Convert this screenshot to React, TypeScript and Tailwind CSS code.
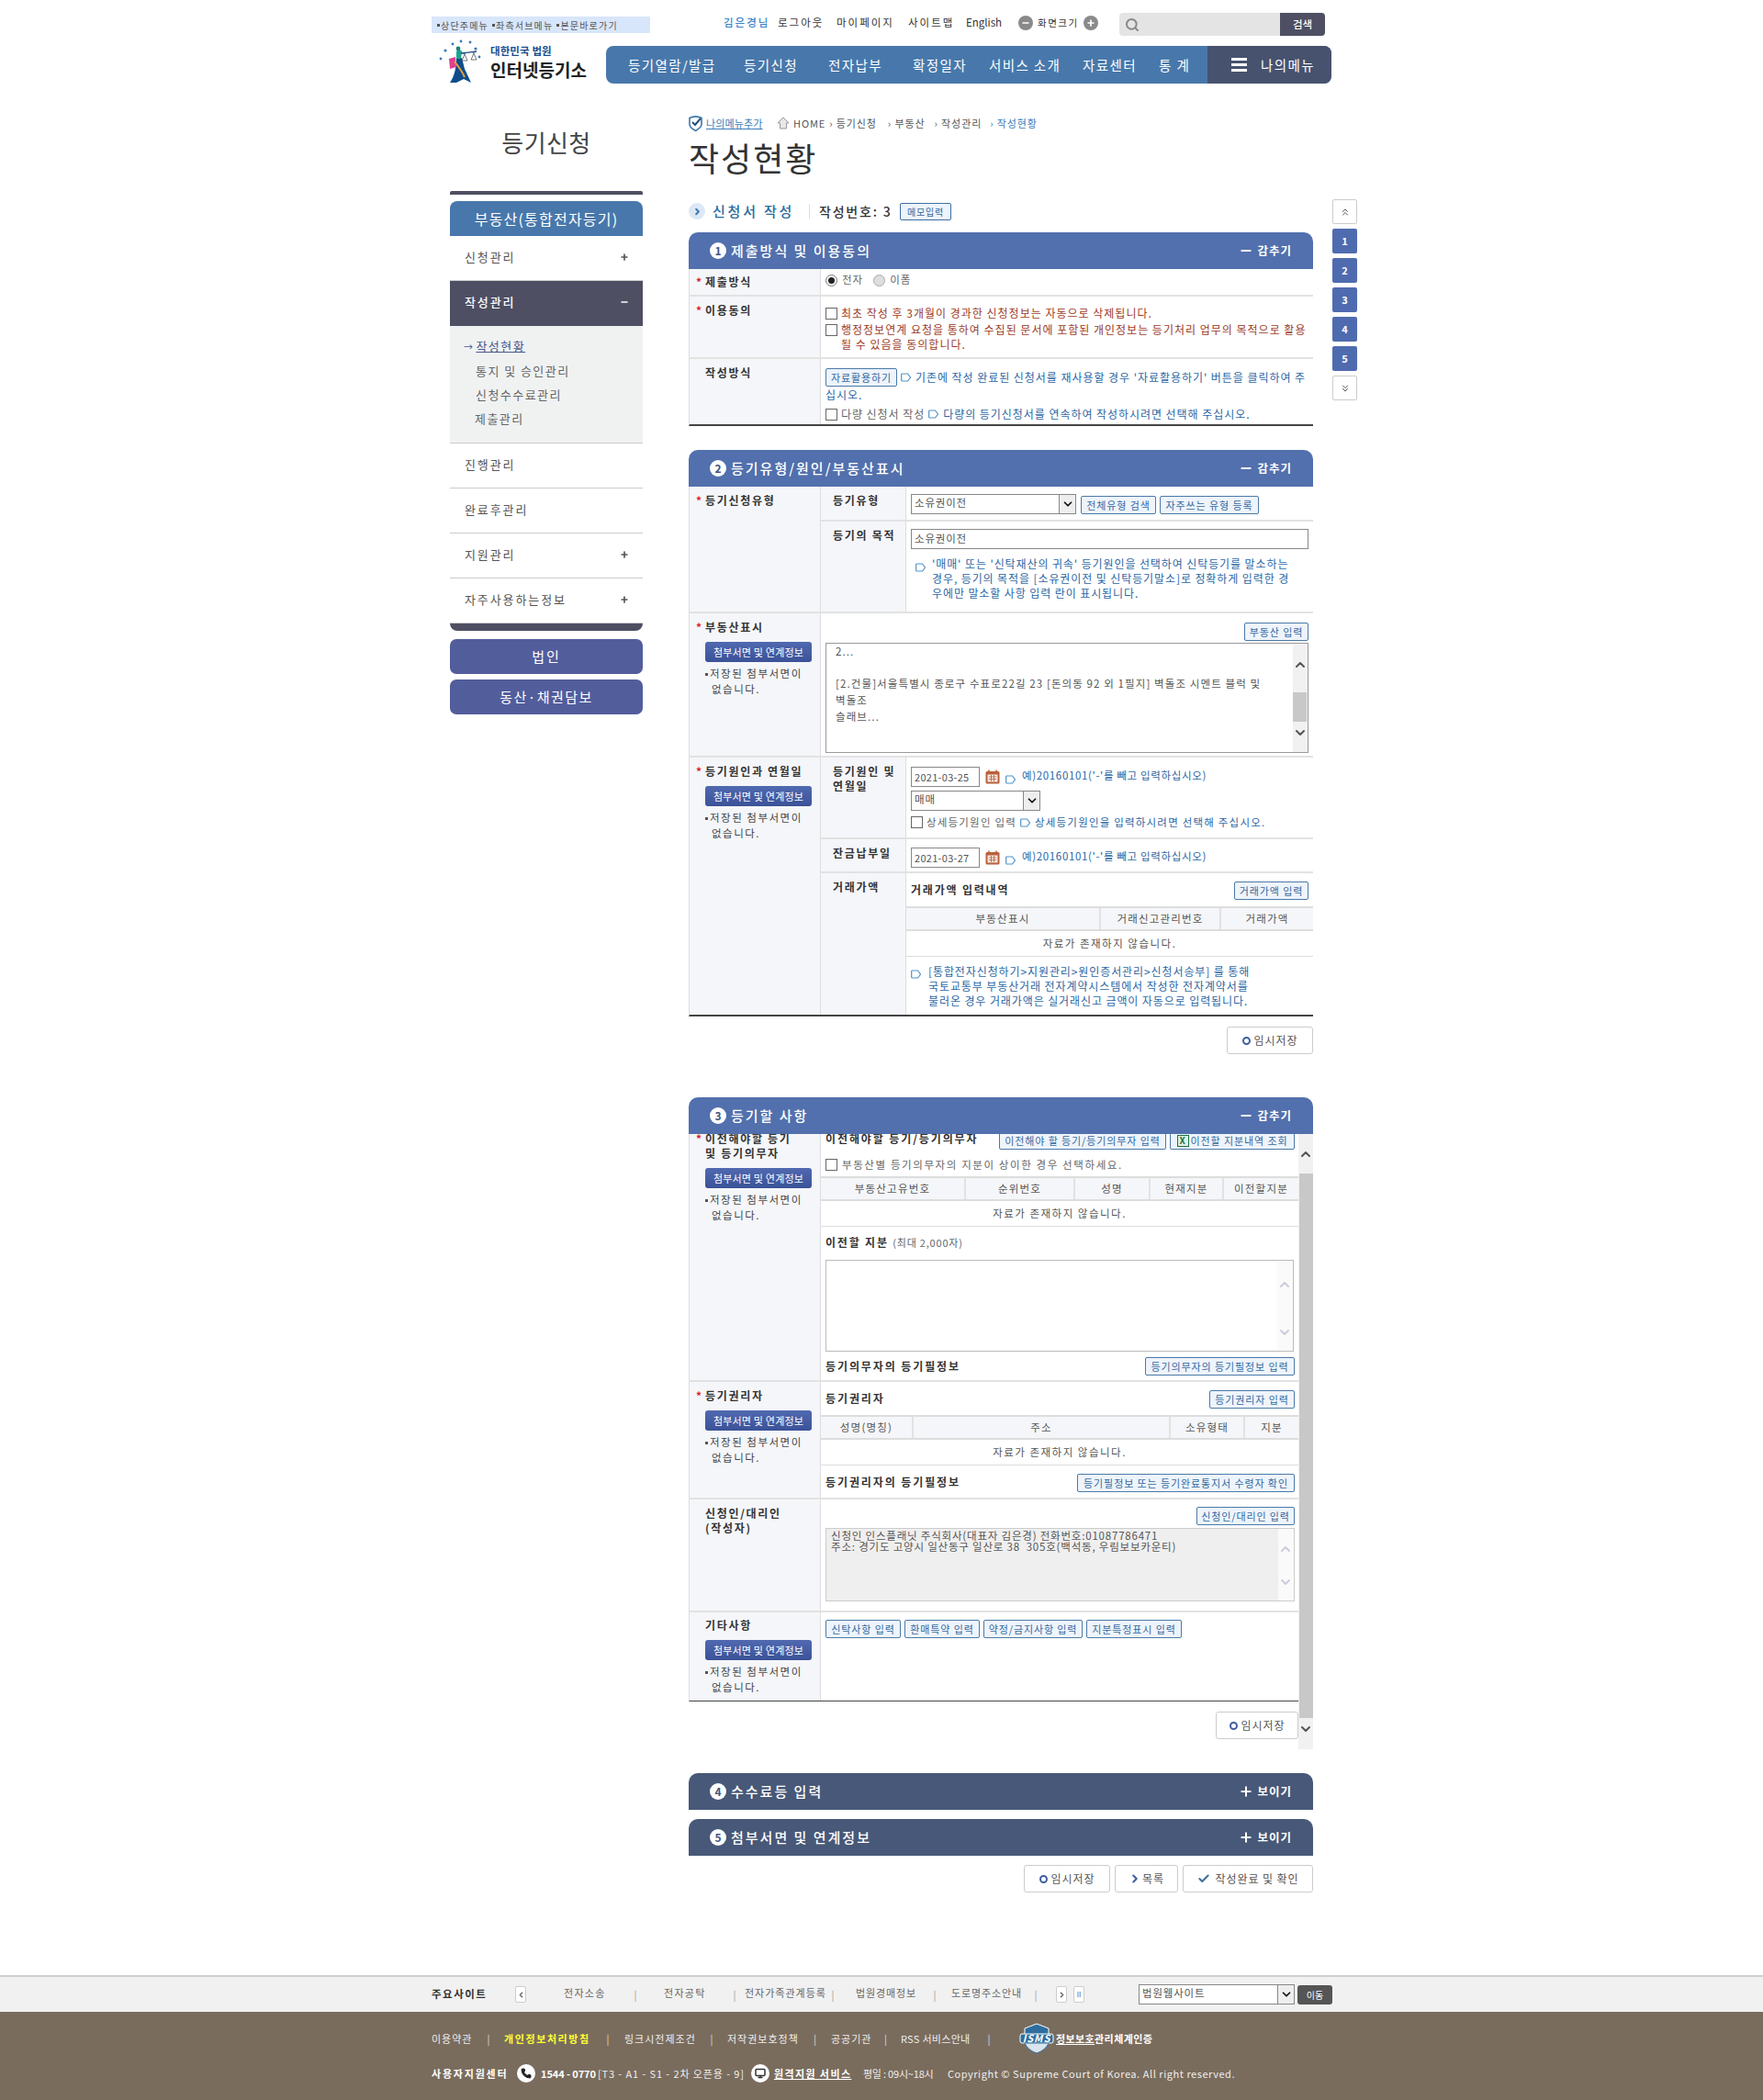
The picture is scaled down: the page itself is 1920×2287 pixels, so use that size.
import React from "react";
import { Search, Phone, Monitor, ChevronUp, ChevronDown, ChevronRight, ChevronLeft, ChevronsUp, ChevronsDown, Check, Plus, Minus } from "lucide-react";

const Hint = () => (
  <svg width="12" height="10" viewBox="0 0 12 10" className="inline-block shrink-0 align-[-1px]">
    <path d="M1.5 1h6l3 4-3 4h-6a.8.8 0 0 1-.8-.8V1.8A.8.8 0 0 1 1.5 1z" fill="#fff" stroke="#4f93c9" strokeWidth="1.2" />
  </svg>
);

const Btn = ({ children, className = "" }: { children: React.ReactNode; className?: string }) => (
  <span className={`inline-flex h-[20px] shrink-0 items-center justify-center whitespace-nowrap rounded-[2px] border border-[#4a7aa8] bg-[#eef4fb] text-[11px] tracking-[0.9px] text-[#33689f] ${className}`}>
    {children}
  </span>
);

const Check2 = () => <span className="inline-block h-[13px] w-[13px] shrink-0 border border-[#666] bg-white" />;

const SelectBox = ({ text, w }: { text: string; w: string }) => (
  <span className={`flex h-[22px] items-center justify-between border border-[#888] bg-white pl-[3px] text-[11.5px] tracking-[0.8px] text-[#555] ${w}`}>
    <span className="-mt-[3px]">{text}</span>
    <span className="flex h-full w-[18px] items-center justify-center border-l border-[#888] bg-[#eee]">
      <ChevronDown size={14} strokeWidth={3} className="text-[#111]" />
    </span>
  </span>
);

const Arrows = ({ up, down, className = "" }: { up: string; down: string; className?: string }) => (
  <div className={`relative shrink-0 ${className}`}>
    <ChevronUp size={16} strokeWidth={3} className={`absolute left-0 ${up} text-[#ccd]`} />
    <ChevronDown size={16} strokeWidth={3} className={`absolute left-0 ${down} text-[#ccd]`} />
  </div>
);

const Th = ({ req, children, attach, pt = "pt-[7px]" }: { req?: boolean; children: React.ReactNode; attach?: boolean; pt?: string }) => (
  <div className={`w-[143px] shrink-0 border-r border-[#ddd] bg-[#f5f6f9] pl-[7px] ${pt}`}>
    <div className="flex">
      <span className="w-[10px] shrink-0 text-[12px] font-bold leading-[16px] text-[#d81f26]">{req ? "*" : ""}</span>
      <div className="text-[12px] font-bold leading-[16px] tracking-[1.7px] text-[#333]">{children}</div>
    </div>
    {attach && (
      <div className="pl-[10px]">
        <div className="mt-[8px] flex h-[22px] w-[116px] items-center justify-center rounded-[3px] bg-gradient-to-b from-[#5069b0] to-[#3b5298] text-[11px] tracking-[0.2px] text-white">첨부서면 및 연계정보</div>
        <div className="mt-[4px] text-[11.5px] leading-[17px] tracking-[1.5px] text-[#444]">
          <div><span className="mr-[2px] inline-block h-[3px] w-[3px] bg-[#555] align-middle" />저장된 첨부서면이</div>
          <div className="pl-[7px]">없습니다.</div>
        </div>
      </div>
    )}
  </div>
);

const Inner = ({ children }: { children: React.ReactNode }) => (
  <div className="w-[93px] shrink-0 border-r border-[#ddd] bg-[#f5f6f9] pl-[13px] pt-[7px] text-[12px] font-bold leading-[16px] tracking-[1.7px] text-[#333]">{children}</div>
);

const Table = ({ cols, empty }: { cols: [string, string][]; empty: string }) => (
  <div>
    <div className="flex h-[27px] border-y-2 border-[#ddd] bg-[#f5f6f9] text-[11.5px] tracking-[1.2px] text-[#555]">
      {cols.map(([label, w], i) => (
        <div key={i} className={`flex items-center justify-center ${w} ${i < cols.length - 1 ? "border-r-2 border-[#e2e2e2]" : ""}`}>{label}</div>
      ))}
    </div>
    <div className="flex h-[28px] items-center justify-center border-b border-[#ddd] text-[11.5px] tracking-[1.5px] text-[#555]">{empty}</div>
  </div>
);

const SectionHead = ({ n, title, action, dark }: { n: number; title: string; action: string; dark?: boolean }) => (
  <div className={`flex h-[40px] items-center justify-between rounded-t-[10px] pl-[23px] pr-[23px] text-white ${dark ? "bg-[#485878]" : "bg-[#5270ad]"}`}>
    <div className="flex items-center">
      <span className="flex h-[18px] w-[18px] items-center justify-center rounded-full bg-white text-[12px] font-bold text-[#40557f]">{n}</span>
      <span className="ml-[5px] text-[15px] font-medium tracking-[2px]">{title}</span>
    </div>
    <div className="flex items-center text-[12.5px] font-bold tracking-[1px]">
      {action === "감추기" ? <Minus size={16} strokeWidth={3} className="mr-[4px]" /> : <Plus size={16} strokeWidth={3} className="mr-[4px]" />}
      {action}
    </div>
  </div>
);

const SaveBtn = ({ w = "w-[93px]", icon = "o", label = "임시저장" }: { w?: string; icon?: "o" | ">" | "v"; label?: string }) => (
  <span className={`flex h-[30px] items-center justify-center rounded-[3px] border border-[#ccc] bg-white text-[12px] tracking-[0.9px] text-[#555] ${w}`}>
    {icon === "o" && <span className="mr-[4px] inline-block h-[9px] w-[9px] rounded-full border-[2.5px] border-[#3f5f9f]" />}
    {icon === ">" && <ChevronRight size={14} strokeWidth={3.5} className="mr-[1px] text-[#3f5f9f]" />}
    {icon === "v" && <Check size={14} strokeWidth={3.5} className="mr-[6px] text-[#3f6f9f]" />}
    {label}
  </span>
);

const DateField = ({ v }: { v: string }) => (
  <div className="flex items-center">
    <span className="flex h-[22px] w-[75px] items-center border border-[#888] bg-white pl-[3px] text-[11px] tracking-[0.3px] text-[#555]">{v}</span>
    <svg width="16" height="16" viewBox="0 0 16 16" className="ml-[6px]">
      <rect x="0.5" y="2" width="15" height="13.5" rx="1.5" fill="#b9613c" />
      <rect x="2.5" y="5.5" width="11" height="8" fill="#f6e9df" />
      <path d="M4 0.5v3M12 0.5v3" stroke="#b9613c" strokeWidth="1.5" />
      <path d="M4 8h8M4 10.5h8M6.5 6v7M9.5 6v7" stroke="#b9613c" strokeWidth="0.8" />
    </svg>
    <span className="ml-[6px]"><Hint /></span>
    <span className="-mt-[3px] ml-[6px] text-[11.5px] tracking-[0.65px] text-[#2b66a3]">예)20160101('-'를 빼고 입력하십시오)</span>
  </div>
);

const Logo = () => (
  <svg width="48" height="48" viewBox="0 0 48 48" className="shrink-0">
    <g fill="#3a78b8">
      <circle cx="4" cy="22" r="1.4" /><circle cx="9" cy="13" r="1.6" /><circle cx="17" cy="6" r="1.4" />
      <circle cx="26" cy="3" r="1.4" /><circle cx="36" cy="4" r="1.4" /><circle cx="42" cy="11" r="1.6" /><circle cx="46" cy="20" r="1.4" />
    </g>
    <path d="M21 21l6 0 3 12 7 15-8-4-8 4-7 0c5-7 7-17 7-27z" fill="#0f4c8a" />
    <path d="M13 22l7-2 1 11-7 2z" fill="#e0408f" />
    <path d="M21 14c2-2 5-2 6 0l-1 8h-5z" fill="#18a58f" />
    <circle cx="23" cy="11" r="2.4" fill="#1b7f78" />
    <path d="M26 16L43 14M30 15v2M40 14v2" stroke="#1f4f7f" strokeWidth="1.3" />
    <path d="M30 17l-3 7h6zM40 16l-3 7h6z" fill="none" stroke="#555" strokeWidth="0.8" />
    <path d="M19 25c4 5 8 10 11 17" stroke="#e8a13a" strokeWidth="2" fill="none" />
  </svg>
);

const Isms = () => (
  <svg width="38" height="34" viewBox="0 0 38 34" className="shrink-0">
    <path d="M19 1l13 5v8H6V6z" fill="#2d6e9e" stroke="#fff" strokeWidth="1" />
    <rect x="1" y="12" width="36" height="10" rx="2" fill="#2d6e9e" stroke="#fff" strokeWidth="1" />
    <path d="M6 22h26c-2 5-7 9-13 11-6-2-11-6-13-11z" fill="#d9e4ec" stroke="#2d6e9e" strokeWidth="1" />
    <text x="19" y="21" textAnchor="middle" fontSize="11" fontWeight="700" fontStyle="italic" fill="#fff">ISMS</text>
  </svg>
);

const Sep = ({ c = "text-[#ddd]", w }: { c?: string; w: string }) => <span className={`${w} text-center text-[11px] tracking-normal ${c}`}>|</span>;

const SideItem = ({ t, sign }: { t: string; sign?: boolean }) => (
  <div className="flex h-[49px] items-center justify-between border-b border-[#ccc] pb-[3px] pl-[16px] pr-[15px] text-[13px] tracking-[1.9px] text-[#555]">
    {t}{sign && <Plus size={10} strokeWidth={4} className="text-[#555]" />}
  </div>
);

export default function App() {
  return (
    <div className="min-h-[2287px] bg-white [font-family:'Noto_Sans_CJK_KR','Noto_Sans_CJK_SC',sans-serif]">
      <div className="relative mx-auto w-[984px]">
        {/* Top utility */}
        <div className="flex h-[40px] items-start pt-[14px]">
          <div className="ml-[2px] mt-[4px] flex h-[18px] w-[238px] items-center bg-[#d8e6fb] pl-[6px] text-[10px] tracking-[1.2px] text-[#555]">
            <span className="mr-[1px] inline-block h-[3px] w-[3px] bg-[#555]" />상단주메뉴
            <span className="ml-[4px] mr-[1px] inline-block h-[3px] w-[3px] bg-[#555]" />좌측서브메뉴
            <span className="ml-[4px] mr-[1px] inline-block h-[3px] w-[3px] bg-[#555]" />본문바로가기
          </div>
          <div className="ml-[80px] flex h-[22px] items-center whitespace-nowrap text-[11.5px] tracking-[2px] text-[#333]">
            <span className="w-[59px] font-medium text-[#3a83c9]">김은경님</span>
            <span className="w-[64px]">로그아웃</span>
            <span className="w-[78px]">마이페이지</span>
            <span className="w-[63px]">사이트맵</span>
            <span className="w-[57px] tracking-normal">English</span>
            <span className="flex h-[16px] w-[16px] items-center justify-center rounded-full bg-[#8a8a8a]"><Minus size={10} strokeWidth={4} className="text-white" /></span>
            <span className="mx-[5px] w-[45px] text-[10.5px] tracking-[1.5px]">화면크기</span>
            <span className="flex h-[16px] w-[16px] items-center justify-center rounded-full bg-[#8a8a8a]"><Plus size={10} strokeWidth={4} className="text-white" /></span>
          </div>
          <div className="ml-[23px] flex h-[25px] w-[224px] overflow-hidden rounded-[4px] bg-[#e4e4e4]">
            <span className="flex w-[175px] items-center pl-[6px]"><Search size={16} strokeWidth={3} className="text-[#888]" /></span>
            <span className="flex w-[49px] items-center justify-center bg-[#4f4f63] text-[11.5px] font-medium text-white">검색</span>
          </div>
        </div>
        {/* Logo and nav */}
        <div className="flex h-[51px] items-end">
          <div className="flex h-[51px] w-[192px] items-start pl-[8px] pt-[2px]">
            <Logo />
            <div className="ml-[10px] pt-[6px]">
              <div className="text-[11.5px] font-bold leading-[15px] tracking-[0.1px] text-[#1a4f8f]">대한민국 법원</div>
              <div className="text-[19px] font-bold leading-[25px] text-[#222]">인터넷등기소</div>
            </div>
          </div>
          <nav className="flex h-[41px] w-[790px] items-center overflow-hidden rounded-[8px] bg-[#4878ab] whitespace-nowrap text-[14.5px] tracking-[1.4px] text-white">
            <span className="ml-[24px] w-[126px]">등기열람/발급</span>
            <span className="w-[92px]">등기신청</span>
            <span className="w-[92px]">전자납부</span>
            <span className="w-[83px]">확정일자</span>
            <span className="w-[102px]">서비스 소개</span>
            <span className="w-[83px]">자료센터</span>
            <span className="w-[53px]">통 계</span>
            <span className="flex h-full flex-1 items-center bg-[#47526f] pl-[26px]">
              <span className="mr-[15px] flex h-[15px] w-[17px] flex-col justify-between">
                <i className="block h-[3px] bg-white" /><i className="block h-[3px] bg-white" /><i className="block h-[3px] bg-white" />
              </span>
              나의메뉴
            </span>
          </nav>
        </div>

        <div className="flex pl-[22px]">
          {/* Sidebar */}
          <aside className="w-[210px] shrink-0">
            <div className="flex h-[117px] items-start justify-center pt-[42px] text-[26px] leading-[44px] tracking-[0.4px] text-[#444]">등기신청</div>
            <div className="h-[4px] rounded-t-[2px] bg-[#4f4f63]" />
            <div className="mt-[7px] flex h-[38px] items-center justify-center rounded-t-[8px] bg-[#4878ab] text-[16px] tracking-[1.2px] text-white">부동산(통합전자등기)</div>
            <SideItem t="신청관리" sign />
            <div className="flex h-[49px] items-center justify-between bg-[#4f4f63] pb-[3px] pl-[16px] pr-[15px] text-[13px] font-medium tracking-[1.9px] text-white">작성관리<Minus size={10} strokeWidth={4} /></div>
            <div className="h-[128px] border-b border-[#ccc] bg-[#f0f2f2] pl-[15px] pt-[9px] text-[13px] leading-[26px] tracking-[1.45px] text-[#666]">
              <div className="text-[#46588f]"><span className="mr-[2px] text-[10px]">→</span><span className="underline">작성현황</span></div>
              <div className="pl-[13px]">통지 및 승인관리</div>
              <div className="pl-[13px]">신청수수료관리</div>
              <div className="pl-[12px]">제출관리</div>
            </div>
            <SideItem t="진행관리" />
            <SideItem t="완료후관리" />
            <SideItem t="지원관리" sign />
            <SideItem t="자주사용하는정보" sign />
            <div className="h-[8px] rounded-b-[8px] bg-[#4f4f63]" />
            <div className="mt-[9px] flex h-[38px] items-center justify-center rounded-[7px] bg-[#525d9c] text-[15px] tracking-[2px] text-white">법인</div>
            <div className="mt-[6px] flex h-[38px] items-center justify-center rounded-[7px] bg-[#525d9c] text-[15px] tracking-[1.500px] text-white">동산·채권담보</div>
          </aside>

          {/* Main */}
          <main className="ml-[50px] w-[680px] shrink-0 pt-[26px]">
            <div className="flex h-[30px] items-center whitespace-nowrap pt-[4px] text-[11px] tracking-[0.9px] text-[#555]">
              <svg width="15" height="17" viewBox="0 0 15 17"><path d="M1 2.5c4-2 9-2 13 0v7c0 3-3 5-6.500 7C4 14.500 1 12.500 1 9.500z" fill="#fff" stroke="#3b76ad" strokeWidth="1.600" /><path d="M4 7l3 3 6-7" fill="none" stroke="#24527f" strokeWidth="2" /></svg>
              <span className="ml-[4px] w-[63px] tracking-[0.15px] text-[#3b7cb9] underline">나의메뉴추가</span>
              <svg width="14" height="14" viewBox="0 0 14 14" className="ml-[14px]"><path d="M7 1l6 6h-2.500v6h-7V7H1z" fill="#e8e8e8" stroke="#999" /></svg>
              <span className="ml-[4px]">HOME</span>
              <span className="ml-[4px]">› 등기신청</span>
              <span className="ml-[12px]">› 부동산</span>
              <span className="ml-[10px]">› 작성관리</span>
              <span className="ml-[9px] text-[#3b7cb9]">› 작성현황</span>
            </div>
            <h1 className="-mt-[1px] h-[70px] text-[36px] font-normal leading-[50px] tracking-[2px] text-[#333]">작성현황</h1>
            <div className="flex h-[28px] items-center">
              <span className="flex h-[18px] w-[18px] items-center justify-center rounded-full bg-[#dce8f5]"><ChevronRight size={11} strokeWidth={4} className="text-[#3b76ad]" /></span>
              <span className="ml-[8px] w-[105px] whitespace-nowrap text-[15px] font-medium tracking-[2.800px] text-[#2a6b9c]">신청서 작성</span>
              <span className="h-[16px] w-px bg-[#ddd]" />
              <span className="ml-[10px] w-[88px] whitespace-nowrap text-[14px] font-medium tracking-[1.800px] text-[#333]">작성번호: 3</span>
              <span className="flex h-[19px] w-[56px] items-center justify-center rounded-[2px] border border-[#3b6ea5] bg-[#eef4fb] text-[10px] tracking-[0.8px] text-[#33689f]">메모입력</span>
            </div>

            <div className="mt-[9px]">
              <SectionHead n={1} title="제출방식 및 이용동의" action="감추기" />
              <div className="flex h-[30px] border-b-2 border-[#e2e2e2] border-l border-l-[#ddd]">
                <Th req pt="pt-[6px]">제출방식</Th>
                <div className="flex items-start pl-[5px] pt-[6px] text-[11.5px] tracking-[1px] text-[#666]">
                  <span className="flex h-[13px] w-[13px] items-center justify-center rounded-full border border-[#777] bg-white"><i className="block h-[7px] w-[7px] rounded-full bg-[#222]" /></span>
                  <span className="ml-[5px] -mt-[3px]">전자</span>
                  <span className="ml-[11px] h-[13px] w-[13px] rounded-full border border-[#aaa] bg-[#ddd]" />
                  <span className="ml-[5px] -mt-[3px]">이폼</span>
                </div>
              </div>
              <div className="flex h-[68px] border-b-2 border-[#e2e2e2] border-l border-l-[#ddd]">
                <Th req>이용동의</Th>
                <div className="pl-[5px] pt-[10px] text-[12px] leading-[16px] tracking-[1px] text-[#9c3a26]">
                  <div className="flex items-center gap-[4px] whitespace-nowrap"><Check2 />최초 작성 후 3개월이 경과한 신청정보는 자동으로 삭제됩니다.</div>
                  <div className="mt-[2px] flex items-center gap-[4px] whitespace-nowrap"><Check2 />행정정보연계 요청을 통하여 수집된 문서에 포함된 개인정보는 등기처리 업무의 목적으로 활용</div>
                  <div className="pl-[17px]">될 수 있음을 동의합니다.</div>
                </div>
              </div>
              <div className="flex h-[73px] border-b-2 border-[#444] border-l border-l-[#ddd]">
                <Th>작성방식</Th>
                <div className="min-w-0 pl-[5px] pt-[10px] text-[12px] leading-[16px] tracking-[0.95px] text-[#2b66a3]">
                  <div className="flex items-center gap-[4px] whitespace-nowrap"><Btn className="w-[78px]">자료활용하기</Btn><Hint />기존에 작성 완료된 신청서를 재사용할 경우 '자료활용하기' 버튼을 클릭하여 주</div>
                  <div className="mt-[1px] leading-[16px]">십시오.</div>
                  <div className="mt-[5px] flex items-center gap-[4px] whitespace-nowrap text-[#2b66a3]"><Check2 /><span className="text-[#666]">다량 신청서 작성</span><Hint />다량의 등기신청서를 연속하여 작성하시려면 선택해 주십시오.</div>
                </div>
              </div>
            </div>

            <div className="mt-[26px]">
              <SectionHead n={2} title="등기유형/원인/부동산표시" action="감추기" />
              <div className="flex h-[138px] border-b-2 border-[#e2e2e2] border-l border-l-[#ddd]">
                <Th req>등기신청유형</Th>
                <div className="flex-1">
                  <div className="flex h-[38px] border-b-2 border-[#e2e2e2]">
                    <Inner>등기유형</Inner>
                    <div className="flex items-start pl-[5px] pt-[8px]">
                      <SelectBox text="소유권이전" w="w-[180px]" />
                      <Btn className="ml-[5px] mt-[2px] w-[82px]">전체유형 검색</Btn>
                      <Btn className="ml-[4px] mt-[2px] w-[108px]">자주쓰는 유형 등록</Btn>
                    </div>
                  </div>
                  <div className="flex h-[98px]">
                    <Inner>등기의 목적</Inner>
                    <div className="pl-[5px] pt-[8px]">
                      <div className="flex h-[22px] w-[433px] items-center border border-[#888] pl-[3px] text-[11.5px] tracking-[0.8px] text-[#555]">소유권이전</div>
                      <div className="mt-[8px] flex pl-[5px] text-[12px] leading-[16px] tracking-[0.9px] text-[#2b66a3]">
                        <span className="mr-[6px] mt-[3px]"><Hint /></span>
                        <div className="whitespace-nowrap">'매매' 또는 '신탁재산의 귀속' 등기원인을 선택하여 신탁등기를 말소하는<br />경우, 등기의 목적을 [소유권이전 및 신탁등기말소]로 정확하게 입력한 경<br />우에만 말소할 사항 입력 란이 표시됩니다.</div>
                      </div>
                    </div>
                  </div>
                </div>
              </div>
              <div className="flex h-[157px] border-b-2 border-[#e2e2e2] border-l border-l-[#ddd]">
                <Th req attach>부동산표시</Th>
                <div className="flex-1 pl-[5px] pr-[5px] pt-[10px]">
                  <div className="flex justify-end"><Btn className="w-[70px]">부동산 입력</Btn></div>
                  <div className="mt-[2px] flex h-[120px] border border-[#999]">
                    <div className="flex-1 overflow-hidden pl-[10px] text-[11.5px] leading-[18px] tracking-[1.1px] text-[#555]">
                      <div className="-mt-[1px]">2...</div>
                      <div className="mt-[17px] whitespace-nowrap">[2.건물]서울특별시 종로구 수표로22길 23 [돈의동 92 외 1필지] 벽돌조 시멘트 블럭 및</div>
                      <div>벽돌조</div>
                      <div>슬래브...</div>
                    </div>
                    <div className="relative w-[16px] shrink-0 bg-[#f1f1f1]">
                      <ChevronUp size={16} strokeWidth={3} className="absolute top-[15px] text-[#555]" />
                      <div className="absolute left-0 top-[53px] h-[32px] w-[15px] bg-[#c8c8c8]" />
                      <ChevronDown size={16} strokeWidth={3} className="absolute top-[89px] text-[#555]" />
                    </div>
                  </div>
                </div>
              </div>
              <div className="flex h-[282px] border-b-2 border-[#444] border-l border-l-[#ddd]">
                <Th req attach>등기원인과 연월일</Th>
                <div className="min-w-0 flex-1">
                  <div className="flex h-[89px] border-b-2 border-[#e2e2e2]">
                    <Inner>등기원인 및<br />연월일</Inner>
                    <div className="pl-[5px] pt-[9px]">
                      <DateField v="2021-03-25" />
                      <div className="mt-[3px]"><SelectBox text="매매" w="w-[141px]" /></div>
                      <div className="mt-[4px] flex items-center gap-[4px] whitespace-nowrap text-[11.5px] tracking-[1.2px] text-[#2b66a3]"><Check2 /><span className="text-[#666]">상세등기원인 입력</span><Hint />상세등기원인을 입력하시려면 선택해 주십시오.</div>
                    </div>
                  </div>
                  <div className="flex h-[37px] border-b-2 border-[#e2e2e2]">
                    <Inner>잔금납부일</Inner>
                    <div className="pl-[5px] pt-[8px]"><DateField v="2021-03-27" /></div>
                  </div>
                  <div className="flex h-[154px]">
                    <Inner>거래가액</Inner>
                    <div className="min-w-0 flex-1">
                      <div className="flex h-[36px] items-start justify-between pl-[5px] pr-[5px] pt-[9px]">
                        <span className="text-[12px] font-bold leading-[18px] tracking-[1.8px] text-[#333]">거래가액 입력내역</span>
                        <Btn className="w-[81px]">거래가액 입력</Btn>
                      </div>
                      <Table cols={[["부동산표시", "w-[212px]"], ["거래신고관리번호", "w-[131px]"], ["거래가액", "flex-1"]]} empty="자료가 존재하지 않습니다." />
                      <div className="mt-[8px] flex pl-[5px] text-[12px] leading-[16px] tracking-[0.9px] text-[#2b66a3]">
                        <span className="mr-[7px] mt-[2px]"><Hint /></span>
                        <div className="whitespace-nowrap">[통합전자신청하기&gt;지원관리&gt;원인증서관리&gt;신청서송부] 를 통해<br />국토교통부 부동산거래 전자계약시스템에서 작성한 전자계약서를<br />불러온 경우 거래가액은 실거래신고 금액이 자동으로 입력됩니다.</div>
                      </div>
                    </div>
                  </div>
                </div>
              </div>
              <div className="mt-[11px] flex h-[31px] justify-end"><SaveBtn w="w-[94px]" /></div>
            </div>

            <div className="mt-[46px]">
              <SectionHead n={3} title="등기할 사항" action="감추기" />
              <div className="flex h-[670px]">
                <div className="w-[664px] overflow-hidden">
                  <div className="-mt-[8px]">
                    <div className="flex h-[278px] border-b-2 border-[#e2e2e2] border-l border-l-[#ddd]">
                      <Th req attach pt="pt-[5px]">이전해야할 등기<br />및 등기의무자</Th>
                      <div className="min-w-0 flex-1">
                        <div className="flex h-[25px] items-end justify-between pl-[5px] pr-[4px]">
                          <span className="whitespace-nowrap text-[12px] font-bold leading-[24px] tracking-[1.9px] text-[#333]">이전해야할 등기/등기의무자</span>
                          <span className="flex">
                            <Btn className="w-[182px]">이전해야 할 등기/등기의무자 입력</Btn>
                            <Btn className="ml-[4px] w-[136px]"><span className="mr-[2px] flex h-[13px] w-[13px] items-center justify-center border border-[#1d7044] bg-[#dff0e4] text-[10px] font-bold leading-none text-[#1d7044]">X</span>이전할 지분내역 조회</Btn>
                          </span>
                        </div>
                        <div className="mt-[8px] flex items-center gap-[5px] whitespace-nowrap pl-[5px] text-[11.5px] tracking-[1.6px] text-[#666]"><Check2 />부동산별 등기의무자의 지분이 상이한 경우 선택하세요.</div>
                        <div className="mt-[4px]"><Table cols={[["부동산고유번호", "w-[158px]"], ["순위번호", "w-[119px]"], ["성명", "w-[82px]"], ["현재지분", "w-[80px]"], ["이전할지분", "flex-1"]]} empty="자료가 존재하지 않습니다." /></div>
                        <div className="pl-[5px] pt-[8px] text-[12px] leading-[18px] tracking-[1.8px] text-[#333]"><span className="font-bold">이전할 지분</span> <span className="text-[11px] tracking-[0.8px] text-[#666]">(최대 2,000자)</span></div>
                        <div className="ml-[5px] mt-[10px] flex h-[100px] w-[510px] justify-end border border-[#bbb]">
                          <Arrows up="top-[18px]" down="top-[70px]" className="w-[17px] bg-[#fafafa]" />
                        </div>
                        <div className="mt-[6px] flex items-center justify-between pl-[5px] pr-[4px]">
                          <span className="text-[12px] font-bold tracking-[1.9px] text-[#333]">등기의무자의 등기필정보</span>
                          <Btn className="w-[163px]">등기의무자의 등기필정보 입력</Btn>
                        </div>
                      </div>
                    </div>
                    <div className="flex h-[128px] border-b-2 border-[#e2e2e2] border-l border-l-[#ddd]">
                      <Th req attach>등기권리자</Th>
                      <div className="min-w-0 flex-1">
                        <div className="flex h-[36px] items-start justify-between pl-[5px] pr-[4px] pt-[9px]">
                          <span className="text-[12px] font-bold leading-[18px] tracking-[1.9px] text-[#333]">등기권리자</span>
                          <Btn className="w-[93px]">등기권리자 입력</Btn>
                        </div>
                        <Table cols={[["성명(명칭)", "w-[101px]"], ["주소", "w-[280px]"], ["소유형태", "w-[81px]"], ["지분", "flex-1"]]} empty="자료가 존재하지 않습니다." />
                        <div className="flex items-start justify-between pl-[5px] pr-[4px] pt-[9px]">
                          <span className="text-[12px] font-bold leading-[18px] tracking-[1.9px] text-[#333]">등기권리자의 등기필정보</span>
                          <Btn className="w-[237px]">등기필정보 또는 등기완료통지서 수령자 확인</Btn>
                        </div>
                      </div>
                    </div>
                    <div className="flex h-[123px] border-b-2 border-[#e2e2e2] border-l border-l-[#ddd]">
                      <Th>신청인/대리인<br />(작성자)</Th>
                      <div className="min-w-0 flex-1 pl-[5px] pr-[4px] pt-[8px]">
                        <div className="flex justify-end"><Btn className="w-[107px]">신청인/대리인 입력</Btn></div>
                        <div className="mt-[3px] flex h-[80px] border border-[#ccc] bg-[#efefef]">
                          <div className="flex-1 whitespace-nowrap pl-[5px] pt-[1px] text-[11.5px] leading-[12px] tracking-[0.8px] text-[#555]">
                            신청인 인스플래닛 주식회사(대표자 김은경) 전화번호:01087786471<br />주소: 경기도 고양시 일산동구 일산로 38 &nbsp;305호(백석동, 우림보보카운티)
                          </div>
                          <Arrows up="top-[14px]" down="top-[50px]" className="h-full w-[17px] bg-[#fafafa]" />
                        </div>
                      </div>
                    </div>
                    <div className="flex h-[97px] border-b border-[#444] border-l border-l-[#ddd]">
                      <Th attach pt="pt-[6px]">기타사항</Th>
                      <div className="flex flex-1 items-start gap-[4px] pl-[5px] pt-[8px]">
                        <Btn className="w-[82px]">신탁사항 입력</Btn>
                        <Btn className="w-[82px]">환매특약 입력</Btn>
                        <Btn className="w-[108px]">약정/금지사항 입력</Btn>
                        <Btn className="w-[104px]">지분특정표시 입력</Btn>
                      </div>
                    </div>
                    <div className="mt-[11px] flex justify-end"><SaveBtn w="w-[90px]" /></div>
                  </div>
                </div>
                <div className="relative w-[16px] bg-[#f1f1f1]">
                  <ChevronUp size={16} strokeWidth={3} className="absolute top-[14px] text-[#555]" />
                  <div className="absolute left-[1px] top-[43px] h-[593px] w-[15px] bg-[#c8c8c8]" />
                  <ChevronDown size={16} strokeWidth={3} className="absolute top-[640px] text-[#555]" />
                </div>
              </div>
            </div>

            <div className="mt-[26px]"><SectionHead dark n={4} title="수수료등 입력" action="보이기" /></div>
            <div className="mt-[10px]"><SectionHead dark n={5} title="첨부서면 및 연계정보" action="보이기" /></div>
            <div className="mt-[10px] flex justify-end gap-[5px]">
              <SaveBtn w="w-[94px]" />
              <SaveBtn w="w-[69px]" icon=">" label="목록" />
              <SaveBtn w="w-[142px]" icon="v" label="작성완료 및 확인" />
            </div>
          </main>
        </div>

        {/* Floating quick menu */}
        <div className="absolute left-[983px] top-[217px] flex w-[27px] flex-col gap-[5px]">
          <span className="flex h-[27px] items-center justify-center rounded-[2px] border border-[#ccc] bg-white"><ChevronsUp size={12} className="text-[#555]" /></span>
          {[1, 2, 3, 4, 5].map((n) => (
            <span key={n} className="flex h-[27px] items-center justify-center rounded-[2px] bg-[#4f6bb0] text-[11px] font-bold text-white">{n}</span>
          ))}
          <span className="flex h-[27px] items-center justify-center rounded-[2px] border border-[#ccc] bg-white"><ChevronsDown size={12} className="text-[#555]" /></span>
        </div>
      </div>

      {/* Footer */}
      <footer className="mt-[90px]">
        <div className="h-[2px] bg-[#cfcfcf]" />
        <div className="h-[38px] bg-[#f1f1f1]">
          <div className="mx-auto flex h-full w-[984px] items-center whitespace-nowrap pl-[2px] text-[11px] tracking-[1.300px] text-[#666]">
            <span className="w-[91px] text-[11.500px] font-bold tracking-[1.5px] text-[#333]">주요사이트</span>
            <span className="flex h-[18px] w-[12px] items-center justify-center rounded-[2px] border border-[#ccc] bg-white"><ChevronLeft size={9} strokeWidth={4} /></span>
            <span className="ml-[41px] w-[46px] -mt-[3px]">전자소송</span>
            <Sep w="ml-[20px] w-[24px]" c="text-[#999]" />
            <span className="ml-[19px] w-[47px] -mt-[3px]">전자공탁</span>
            <Sep w="ml-[20px] w-[20px]" c="text-[#999]" />
            <span className="ml-[1px] w-[89px] -mt-[3px] tracking-[1px]">전자가족관계등록</span>
            <Sep w="w-[14px]" c="text-[#999]" />
            <span className="ml-[18px] w-[66px] -mt-[3px] tracking-[0.9px]">법원경매정보</span>
            <Sep w="ml-[8px] w-[24px]" c="text-[#999]" />
            <span className="ml-[6px] w-[77px] -mt-[3px] tracking-[0.9px]">도로명주소안내</span>
            <Sep w="ml-[4px] w-[22px]" c="text-[#999]" />
            <span className="ml-[11px] flex h-[18px] w-[12px] items-center justify-center rounded-[2px] border border-[#ccc] bg-white"><ChevronRight size={9} strokeWidth={4} /></span>
            <span className="ml-[7px] flex h-[18px] w-[12px] items-center justify-center rounded-[2px] border border-[#ccc] bg-white text-[8px] tracking-normal">II</span>
            <span className="ml-[59px]"><SelectBox text="법원웹사이트" w="w-[170px]" /></span>
            <span className="ml-[3px] flex h-[21px] w-[38px] items-center justify-center rounded-[3px] bg-[#555] text-[10px] tracking-normal text-white">이동</span>
          </div>
        </div>
        <div className="h-[96px] bg-[#7a6c5d]">
          <div className="mx-auto w-[984px] pl-[2px] text-[11px] text-[#eee]">
            <div className="flex h-[52px] items-center whitespace-nowrap pt-[6px] tracking-[1px]">
              <span className="w-[45px]">이용약관</span>
              <Sep w="w-[34px]" />
              <span className="w-[95px] font-bold tracking-[1.600px] text-[#ffff33]">개인정보처리방침</span>
              <Sep w="w-[36px]" />
              <span className="w-[78px]">링크시전제조건</span>
              <Sep w="w-[34px]" />
              <span className="w-[78px]">저작권보호정책</span>
              <Sep w="w-[35px]" />
              <span className="w-[43px]">공공기관</span>
              <Sep w="w-[33px]" />
              <span className="w-[79px] tracking-[0.3px]">RSS 서비스안내</span>
              <Sep w="w-[34px]" />
              <span className="ml-[16px]"><Isms /></span>
              <span className="ml-[2px] text-[11px] font-bold tracking-[0.4px] text-white"><span className="underline">정보보호</span>관리체계인증</span>
            </div>
            <div className="flex h-[30px] items-center whitespace-nowrap">
              <span className="w-[93px] font-bold tracking-[1.800px] text-white">사용자지원센터</span>
              <span className="flex h-[20px] w-[20px] items-center justify-center rounded-full bg-white"><Phone size={12} fill="#222" className="text-[#222]" /></span>
              <span className="ml-[6px] font-bold tracking-[-0.1px] text-white">1544 - 0770</span>
              <span className="ml-[2px] w-[167px] tracking-[0.9px]">[T3 - A1 - S1 - 2차 오픈용 - 9]</span>
              <span className="flex h-[20px] w-[20px] items-center justify-center rounded-full bg-white"><Monitor size={12} strokeWidth={3} className="text-[#333]" /></span>
              <span className="ml-[5px] w-[97px] font-bold tracking-[1.4px] text-white underline">원격지원 서비스</span>
              <span className="w-[92px] tracking-[-0.2px]">평일 : 09시~18시</span>
              <span className="tracking-[0.55px]">Copyright © Supreme Court of Korea. All right reserved.</span>
            </div>
          </div>
        </div>
      </footer>
    </div>
  );
}
